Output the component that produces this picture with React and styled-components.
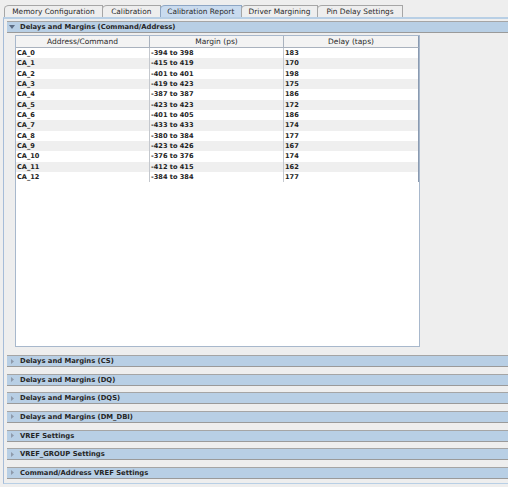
import styled, { createGlobalStyle } from "styled-components";

const GlobalStyle = createGlobalStyle`
  html, body {
    margin: 0;
    padding: 0;
    background: #eeeeee;
    overflow: hidden;
  }
  body {
    font-family: "DejaVu Sans", Verdana, sans-serif;
    color: #2a2a2a;
  }
`;

const Window = styled.div`
  width: 508px;
  height: 487px;
  overflow: hidden;
  background: #eeeeee;
`;

const TabStrip = styled.div`
  display: flex;
  padding: 5px 0 0 4px;
`;

const Tab = styled.div`
  box-sizing: border-box;
  width: ${(p) => p.$w}px;
  height: 12px;
  margin-right: -1px;
  border: 1px solid ${(p) => (p.$active ? "#8ea6c4" : "#a6a6a6")};
  border-bottom: none;
  border-top-left-radius: 5px 4px;
  background: ${(p) => (p.$active ? "#c9dbef" : "#eeeeee")};
  font-size: 7.4px;
  line-height: 11px;
  text-align: center;
  white-space: nowrap;
  color: #2a2a2a;
`;

const Panel = styled.div`
  width: 600px;
  margin-left: 3px;
  border-left: 1px solid #a6bcd8;
  border-top: 2px solid #b8cfe5;
  border-bottom: 1px solid #b8cfe5;
  padding: 2px 0 3.7px 3px;
`;

const SectionBar = styled.div`
  box-sizing: border-box;
  height: 12px;
  margin-top: ${(p) => p.$gap}px;
  display: flex;
  align-items: center;
  padding-left: ${(p) => (p.$open ? 2 : 4)}px;
  background: #b8cfe5;
  border-top: 1px solid #a5a5a5;
  border-bottom: 1px solid #9a9a9a;
  font-size: 6.8px;
  font-weight: bold;
  color: #262626;
  white-space: nowrap;
`;

const Arrow = styled.svg`
  flex: none;
  margin-right: ${(p) => (p.$open ? 5 : 6)}px;
`;

const TableBox = styled.div`
  box-sizing: border-box;
  width: 405px;
  height: 312px;
  margin: 2px 0 0 8px;
  background: #ffffff;
  border: 1px solid #a8b8cc;
`;

const Grid = styled.div`
  display: grid;
  grid-template-columns: 134px 134px 135px;
  grid-template-rows: 12px;
  grid-auto-rows: 10.33px;
`;

const HeadCell = styled.div`
  box-sizing: border-box;
  background: #f3f3f3;
  border-right: 1px solid ${(p) => (p.$last ? "#8a9ab0" : "#a9b2be")};
  border-bottom: 1px solid #a9b2be;
  font-size: 7.5px;
  line-height: 11px;
  text-align: center;
  color: #2a2a2a;
  white-space: nowrap;
`;

const Cell = styled.div`
  box-sizing: border-box;
  padding-left: 1px;
  background: ${(p) => (p.$alt ? "#efefef" : "#ffffff")};
  border-right: 1px solid ${(p) => (p.$last ? "#8a9ab0" : "#c4c8ce")};
  font-size: 6.6px;
  font-weight: bold;
  line-height: 10.33px;
  color: #222;
  white-space: nowrap;
`;

const tabs = [
  { label: "Memory Configuration", w: 99 },
  { label: "Calibration", w: 58.5 },
  { label: "Calibration Report", w: 82.5, active: true },
  { label: "Driver Margining", w: 77 },
  { label: "Pin Delay Settings", w: 86 },
];

const rows = [
  ["CA_0", "-394 to 398", "183"],
  ["CA_1", "-415 to 419", "170"],
  ["CA_2", "-401 to 401", "198"],
  ["CA_3", "-419 to 423", "175"],
  ["CA_4", "-387 to 387", "186"],
  ["CA_5", "-423 to 423", "172"],
  ["CA_6", "-401 to 405", "186"],
  ["CA_7", "-433 to 433", "174"],
  ["CA_8", "-380 to 384", "177"],
  ["CA_9", "-423 to 426", "167"],
  ["CA_10", "-376 to 376", "174"],
  ["CA_11", "-412 to 415", "162"],
  ["CA_12", "-384 to 384", "177"],
];

const collapsed = [
  "Delays and Margins (CS)",
  "Delays and Margins (DQ)",
  "Delays and Margins (DQS)",
  "Delays and Margins (DM_DBI)",
  "VREF Settings",
  "VREF_GROUP Settings",
  "Command/Address VREF Settings",
];

function OpenArrow() {
  return (
    <Arrow $open width="6" height="4" viewBox="0 0 6 4">
      <path d="M0 0 L6 0 L3 4 Z" fill="#5d6d84" />
    </Arrow>
  );
}

function ClosedArrow() {
  return (
    <Arrow width="3" height="5" viewBox="0 0 3 5">
      <path d="M0 0 L3 2.5 L0 5 Z" fill="#8e9aab" />
    </Arrow>
  );
}

export default function App() {
  return (
    <Window>
      <GlobalStyle />
      <TabStrip>
        {tabs.map((t) => (
          <Tab key={t.label} $w={t.w} $active={t.active}>
            {t.label}
          </Tab>
        ))}
      </TabStrip>

      <Panel>
        <SectionBar $open $gap={0}>
          <OpenArrow />
          Delays and Margins (Command/Address)
        </SectionBar>

        <TableBox>
          <Grid>
            <HeadCell>Address/Command</HeadCell>
            <HeadCell>Margin (ps)</HeadCell>
            <HeadCell $last>Delay (taps)</HeadCell>
            {rows.map((r, i) =>
              r.map((v, j) => (
                <Cell key={i + "-" + j} $alt={i % 2 === 1} $last={j === 2}>
                  {v}
                </Cell>
              ))
            )}
          </Grid>
        </TableBox>

        {collapsed.map((name, i) => (
          <SectionBar key={name} $gap={i === 0 ? 8 : 6.67}>
            <ClosedArrow />
            {name}
          </SectionBar>
        ))}
      </Panel>
    </Window>
  );
}
